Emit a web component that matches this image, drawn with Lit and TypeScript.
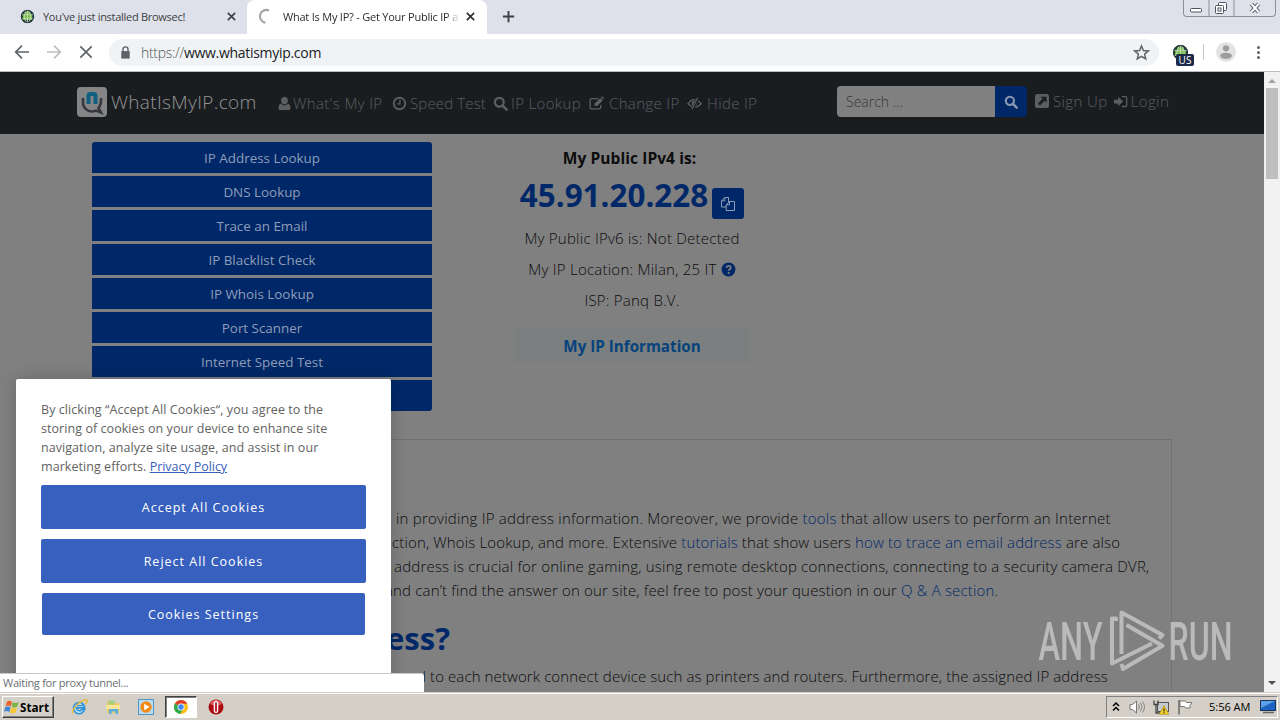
import { LitElement, html, css, svg } from 'lit';
import { customElement, property, state } from 'lit/decorators.js';
import { classMap } from 'lit/directives/class-map.js';

const icons: Record<string, unknown> = {
  user: svg`<path fill="currentColor" d="M8 1.2a3.6 3.6 0 0 1 3.6 3.8c0 2.2-1.6 4-3.6 4S4.400 7.200 4.400 5A3.600 3.600 0 0 1 8 1.200zM4.300 7.900C5.200 9.200 6.500 10 8 10s2.800-.8 3.700-2.100c2 .5 2.700 2.700 2.700 4.900 0 1.300-.8 2.200-2 2.200H3.600c-1.200 0-2-.9-2-2.200 0-2.200.7-4.400 2.700-4.900z"/>`,
  clock: svg`<circle cx="8" cy="8" r="6.1" fill="none" stroke="currentColor" stroke-width="2"/><path d="M8.500 4v4.500H5.500" fill="none" stroke="currentColor" stroke-width="1.300"/>`,
  search: svg`<circle cx="6.700" cy="6.700" r="4.700" fill="none" stroke="currentColor" stroke-width="2.400"/><path d="M10.200 10.200l4.300 4.300" stroke="currentColor" stroke-width="2.800" stroke-linecap="round"/>`,
  edit: svg`<path d="M12.500 9.500V12a1.800 1.800 0 0 1-1.800 1.800H3A1.800 1.800 0 0 1 1.200 12V4.500A1.800 1.800 0 0 1 3 2.700h6.800" fill="none" stroke="currentColor" stroke-width="1.400"/><path fill="currentColor" d="M6 8l6-6 2.700 2.700-6 6H6zM12.700 1.400l.6-.6c.4-.4.9-.4 1.300 0l1 1c.4.4.4.9 0 1.300l-.5.6z"/>`,
  eye: svg`<path d="M1 8.300Q7.500-.5 15.200 8.300 8.500 15.500 1 8.300z" fill="none" stroke="currentColor" stroke-width="1.400"/><circle cx="8" cy="7.700" r="2.900" fill="currentColor"/><path d="M11.800 2L5.500 14.500" stroke="#1a1d20" stroke-width="3.200"/><path d="M11.400 1.800L5.200 14" stroke="currentColor" stroke-width="1.300"/>`,
  signup: svg`<rect x="1" y="1" width="14" height="14" rx="2.600" fill="currentColor"/><path d="M6.500 3.800h6v6l-2-2-4.600 4.600-2-2L8.500 5.800z" fill="#1a1d20"/>`,
  login: svg`<path fill="currentColor" d="M1 6h4.500V3l5.300 5-5.300 5v-3H1z"/><path d="M9.500 2.700h3.700c.8 0 1.400.6 1.400 1.400v7.800c0 .8-.6 1.400-1.400 1.400H9.500" fill="none" stroke="currentColor" stroke-width="1.400"/>`,
  copy: svg`<path d="M4.800 1.500h3.700v4.200M4.800 1.500L1.500 4.800v6.200h4.700M4.800 1.500v3.300H1.500M9.500 5.500h5v9H6.200V8.800zM9.500 5.500v3.300H6.200M8.500 5.500V1.500" fill="none" stroke="currentColor"/>`,
  help: svg`<circle cx="8" cy="8" r="7.400" fill="#002868"/><path d="M5.700 6.100c.3-1.500 1.300-2 2.400-2 1.300 0 2.300.8 2.300 2 0 1.600-2.200 1.500-2.200 3.200" fill="none" stroke="#808080" stroke-width="1.900"/><rect x="7.200" y="10.700" width="2" height="1.900" fill="#808080"/>`,
  back: svg`<path d="M15 8H2M8 1.700L1.700 8 8 14.300" fill="none" stroke="currentColor" stroke-width="1.700"/>`,
  forward: svg`<path d="M1 8h13M8 1.700L14.300 8 8 14.300" fill="none" stroke="currentColor" stroke-width="1.700"/>`,
  stop: svg`<path d="M2.300 2.300l11.400 11.400M13.700 2.300L2.300 13.700" stroke="currentColor" stroke-width="1.700"/>`,
  close: svg`<path d="M3.500 3.500l9 9M12.500 3.500l-9 9" stroke="currentColor" stroke-width="2"/>`,
  plus: svg`<path d="M8 2v12M2 8h12" stroke="currentColor" stroke-width="2"/>`,
  lock: svg`<path d="M3.500 6.500h9v8h-9z" fill="currentColor"/><path d="M5.300 7V4.700a2.700 2.700 0 0 1 5.400 0V7" fill="none" stroke="currentColor" stroke-width="1.500"/>`,
  star: svg`<path d="M8 1.800l1.800 4.300 4.700.4-3.600 3 1.100 4.600L8 11.600l-4 2.500 1.100-4.600-3.600-3 4.700-.4z" fill="none" stroke="currentColor" stroke-width="1.400"/>`,
  spinner: svg`<path d="M7 13.800A6 6 0 1 1 10.500 2.500" fill="none" stroke="#a0a3a8" stroke-width="2"/>`,
  globe: svg`<circle cx="8" cy="8" r="7" fill="#24443a"/><path d="M3 6.500h10v5H3zM5 3h6v3H5z" fill="#7cc04b"/><path d="M1.500 6h13M1.500 10.500h13M8 1v14M8 1C3.500 5 3.500 11 8 15M8 1c4.500 4 4.500 10 0 14" fill="none" stroke="#cfe3c6" stroke-width=".8"/><circle cx="8" cy="8" r="6.600" fill="none" stroke="#24333f"/>`,
  avatar: svg`<circle cx="8" cy="8" r="8" fill="#e3e3e3"/><circle cx="8" cy="5" r="2.500" fill="#9d9d9d"/><ellipse cx="8" cy="11" rx="4.700" ry="2.500" fill="#9d9d9d"/>`,
  windows: svg`<path d="M3 2.500Q5.500 1 8 2.800L6.800 7.400Q4.300 5.800 1.600 7.200z" fill="#e8622c"/><path d="M8.700 3.200Q11.500 4.700 14.700 3l-1.500 4.800Q10.400 9.200 7.600 7.700z" fill="#7db544"/><path d="M1.400 8Q4 6.700 6.500 8.300L5.300 12.900Q2.700 11.300 0 12.700z" fill="#3f86d6"/><path d="M7.300 8.600q2.800 1.500 5.700.2l-1.400 4.700Q8.800 14.900 6 13.400z" fill="#f8c62c"/>`,
  ie: svg`<path d="M12.900 9.300H4.900a3.200 3.200 0 0 0 5.800 1.300h2.100A5.300 5.300 0 1 1 12.900 9.300z" fill="#bfe2f7" stroke="#2f93d8" stroke-width="1.500"/><path d="M5.200 7.200h5.800a2.900 2.900 0 0 0-5.800 0z" fill="#d4d0c8" stroke="#2f93d8"/><path d="M2 14.300C-.5 11.500 9 1.500 14.300 1.700c2 .3.300 3.300-.8 4.300" fill="none" stroke="#e9b93a" stroke-width="1.300"/>`,
  folder: svg`<path d="M2 2.500h5l1 1.500h6v10H2z" fill="#ecc95f"/><path d="M3.500 1.500h6v4h-6z" fill="#a9cf7c"/><path d="M1 6h14v4H1z" fill="#f8e59a"/><path d="M4 15v-5h9v5h-2.500v-2.500h-4V15z" fill="#58aee0"/>`,
  media: svg`<rect x=".5" y=".5" width="15" height="15" fill="#b9dcf2" stroke="#4f96c8"/><circle cx="8" cy="8" r="5.700" fill="#f28a16"/><path d="M6.200 4.800v6.400L11.500 8z" fill="#fff"/>`,
  chrome: svg`<circle cx="8" cy="8" r="7" fill="#fbc116"/><path d="M8 8L1.900 4.600A7 7 0 0 1 14.200 4.700H8z" fill="#e33b2e"/><path d="M8 8L1.900 4.600A7 7 0 0 0 7.200 15l3.200-5.500z" fill="#2da94f"/><circle cx="8" cy="8" r="3.500" fill="#fff"/><circle cx="8" cy="8" r="2.700" fill="#4285f4"/>`,
  opera: svg`<circle cx="8" cy="8" r="7.500" fill="#a80d12"/><path d="M2 5a6.500 6.500 0 0 1 12 0q-6 3.500-12 0z" fill="#dd5a58"/><rect x="5.700" y="2" width="4.600" height="12" rx="2.200" fill="#fff"/><rect x="7.100" y="3.200" width="1.800" height="9.600" rx=".9" fill="#b01419"/>`,
  chevrons: svg`<path d="M5 7l3-3 3 3M5 11.500l3-3 3 3" fill="none" stroke="#000" stroke-width="1.500"/>`,
  speaker: svg`<path d="M1 5.500h2.500L7.500 2v12l-4-3.500H1z" fill="#fff" stroke="#777"/><path d="M9.500 5.500q1.800 2.500 0 5M11.500 3.800q3 4.200 0 8.400M13.500 2.500q4 5.500 0 11" fill="none" stroke="#888"/>`,
  network: svg`<rect x="4.500" y="3.500" width="11" height="9" fill="#c4cad2" stroke="#555"/><path d="M1 1.500v4h4v-4M3 5.500V14h4" fill="none" stroke="#444" stroke-width="1.300"/><path d="M11 6.500l4.800 8.800H6.200z" fill="#f7cf2a" stroke="#a8850d" stroke-width=".6"/><path d="M11 9.500v3M11 13.300v1" stroke="#222" stroke-width="1.200"/>`,
  flag: svg`<path d="M2 1v14.500" stroke="#666" stroke-width="1.500"/><path d="M3 2h5.500l1 1.500H15l-2 3 0 2.500H8.500L7.500 7.500H3z" fill="#fff" stroke="#777"/>`,
  monitor: svg`<rect x=".5" y="1.500" width="15" height="10" fill="#1c62c0" stroke="#17345f"/><path d="M1 2h14L1 9z" fill="#5ba0e8"/><path d="M3 13.500h11" stroke="#666" stroke-width="1.500"/>`,
};

@customElement('svg-icon')
class SvgIcon extends LitElement {
  @property() name = '';
  @property({ type: Number }) size = 16;

  static styles = css`
    :host {
      display: inline-flex;
      flex: none;
    }
  `;

  render() {
    return html`<svg width=${this.size} height=${this.size} viewBox="0 0 16 16">${icons[this.name]}</svg>`;
  }
}

@customElement('browser-chrome')
class BrowserChrome extends LitElement {
  static styles = css`
    :host {
      display: block;
      flex: none;
      font-family: "Open Sans", sans-serif;
      color: #3c4043;
    }

    .tabs {
      display: flex;
      height: 34px;
      background: #dee1e9;
    }

    .tab {
      display: flex;
      align-items: center;
      box-sizing: border-box;
      height: 34px;
      padding-bottom: 1px;
      font-size: 11px;
      letter-spacing: -0.28px;
      white-space: nowrap;
    }

    .tab .title {
      flex: 1;
      overflow: hidden;
      margin: 0 7px 0 8px;
    }

    .tab.first {
      width: 247px;
      padding-left: 20px;
      padding-right: 9px;
    }

    .tab.active {
      width: 240px;
      padding-left: 11px;
      padding-right: 10px;
      background: #fff;
      border-radius: 8px 8px 0 0;
      color: #2b2d30;
    }

    .tab.active .title {
      margin-right: 4px;
      letter-spacing: -0.22px;
      -webkit-mask-image: linear-gradient(90deg, #000 92%, transparent);
    }

    .new-tab {
      display: flex;
      align-items: center;
      padding: 0 0 1px 14px;
    }

    .controls {
      display: flex;
      box-sizing: border-box;
      width: 93px;
      height: 17px;
      margin: 0 4px 0 auto;
      border: 1px solid #8b8f99;
      border-top: 0;
      border-radius: 0 0 4px 4px;
      overflow: hidden;
    }

    .controls svg {
      flex: none;
    }

    .toolbar {
      display: flex;
      align-items: center;
      box-sizing: border-box;
      height: 38px;
      padding: 0 14px 1px;
      border-bottom: 1px solid #b9bec2;
      background: #fff;
      color: #5f6368;
    }

    .buttons {
      display: flex;
      gap: 16px;
      width: 95px;
    }

    .faded {
      color: #bdbfc2;
    }

    .omnibox {
      display: flex;
      flex: 1;
      align-items: center;
      height: 27px;
      padding: 0 9px;
      border-radius: 14px;
      background: #eff3f6;
      font-size: 14px;
      letter-spacing: -0.3px;
    }

    .url {
      flex: 1;
      margin-left: 8px;
      font-weight: 300;
      color: #555;
    }

    .url b {
      font-weight: 400;
      color: #202124;
    }

    .extensions {
      display: flex;
      align-items: center;
      width: 107px;
    }

    .browsec {
      position: relative;
      display: flex;
      margin-left: 13px;
    }

    .badge {
      position: absolute;
      left: 4px;
      top: 10px;
      width: 18px;
      height: 12px;
      border-radius: 2px;
      background: #1c2b48;
      color: #fff;
      font-size: 10px;
      line-height: 12px;
      text-align: center;
      letter-spacing: 0;
    }

    .line {
      width: 1px;
      height: 16px;
      margin: 0 12px 0 14px;
      background: #c8cacc;
    }

    .dots {
      display: grid;
      gap: 2px;
      margin-left: 21px;
    }

    .dots i {
      width: 3px;
      height: 3px;
      border-radius: 50%;
      background: #5f6368;
    }
  `;

  render() {
    return html`
      <div class="tabs">
        <div class="tab first">
          <svg-icon name="globe" size="15"></svg-icon>
          <span class="title">You've just installed Browsec!</span>
          <svg-icon name="close" size="13"></svg-icon>
        </div>
        <div class="tab active">
          <svg-icon name="spinner" size="17"></svg-icon>
          <span class="title">What Is My IP? - Get Your Public IP a</span>
          <svg-icon name="close" size="13"></svg-icon>
        </div>
        <div class="new-tab"><svg-icon name="plus" size="15"></svg-icon></div>
        <div class="controls">
          <svg width="91" height="16" fill="none" stroke="#4d5360">
            <path d="M25 0v16M50 0v16" stroke="#8b8f99" />
            <rect x="6.500" y="8.500" width="11" height="3.500" rx="1" fill="#fff" />
            <rect x="34.500" y="2.500" width="8" height="8" rx="1" fill="#fff" />
            <rect x="31.500" y="5.500" width="8" height="8" rx="1" fill="#fff" />
            <rect x="34" y="8" width="3" height="3" />
            <path d="M67.500 4l7 8M74.500 4l-7 8" stroke-width="4" />
            <path d="M67.500 4l7 8M74.500 4l-7 8" stroke="#fff" stroke-width="2" />
          </svg>
        </div>
      </div>
      <div class="toolbar">
        <div class="buttons">
          <svg-icon name="back"></svg-icon>
          <svg-icon class="faded" name="forward"></svg-icon>
          <svg-icon name="stop"></svg-icon>
        </div>
        <div class="omnibox">
          <svg-icon name="lock" size="15"></svg-icon>
          <span class="url">https://<b>www.whatismyip.com</b></span>
          <svg-icon name="star" size="17"></svg-icon>
        </div>
        <div class="extensions">
          <div class="browsec">
            <svg-icon name="globe" size="17"></svg-icon>
            <span class="badge">US</span>
          </div>
          <span class="line"></span>
          <svg-icon name="avatar" size="20"></svg-icon>
          <div class="dots"><i></i><i></i><i></i></div>
        </div>
      </div>
    `;
  }
}

@customElement('cookie-banner')
class CookieBanner extends LitElement {
  static styles = css`
    :host {
      position: absolute;
      left: 16px;
      bottom: 0;
      box-sizing: border-box;
      width: 375px;
      height: 313px;
      padding: 21px 25px 0;
      border-radius: 2px 2px 0 0;
      background: #fff;
      box-shadow: 0 0 18px rgba(0, 0, 0, 0.2);
      font-family: "Open Sans", sans-serif;
      font-size: 12.5px;
    }

    .text {
      margin: 0 0 9px;
      line-height: 19px;
      letter-spacing: 0.06px;
      white-space: nowrap;
      color: #626262;
    }

    .text a {
      color: #3860be;
      text-decoration: underline;
      letter-spacing: -0.05px;
    }

    .actions {
      display: grid;
      gap: 10px;
    }

    .actions button {
      height: 44px;
      padding: 0;
      border: 0;
      border-radius: 2px;
      background: #3860be;
      color: #fff;
      font: inherit;
      letter-spacing: 1px;
    }

    .actions .settings {
      height: 42px;
      margin: 0 1px;
    }
  `;

  render() {
    return html`
      <p class="text">
        By clicking “Accept All Cookies“, you agree to the<br />
        storing of cookies on your device to enhance site<br />
        navigation, analyze site usage, and assist in our<br />
        marketing efforts. <a>Privacy Policy</a>
      </p>
      <div class="actions">
        <button>Accept All Cookies</button>
        <button>Reject All Cookies</button>
        <button class="settings">Cookies Settings</button>
      </div>
    `;
  }
}

@customElement('ip-page')
class IpPage extends LitElement {
  @state()
  private nav = [
    { icon: 'user', label: "What's My IP", cls: 'w-user' },
    { icon: 'clock', label: 'Speed Test', cls: 'w-clock' },
    { icon: 'search', label: 'IP Lookup', cls: 'w-search' },
    { icon: 'edit', label: 'Change IP', cls: 'w-edit' },
    { icon: 'eye', label: 'Hide IP', cls: 'w-eye' },
  ];

  @state()
  private tools = [
    'IP Address Lookup',
    'DNS Lookup',
    'Trace an Email',
    'IP Blacklist Check',
    'IP Whois Lookup',
    'Port Scanner',
    'Internet Speed Test',
    '',
  ];

  static styles = css`
    :host {
      flex: 1;
      min-width: 0;
      overflow: hidden;
      background: #808080;
      font: 300 15px "Open Sans", sans-serif;
      color: #0c0c0c;
    }

    .header {
      display: flex;
      align-items: center;
      height: 62px;
      padding-left: 77px;
      background: #1a1d20;
      color: #5c5e60;
      white-space: nowrap;
    }

    .brand {
      display: flex;
      align-items: center;
      gap: 4px;
      width: 201px;
      padding-bottom: 2px;
      font-size: 19px;
      letter-spacing: 0.35px;
      color: #949596;
    }

    .nav {
      display: flex;
      gap: 8px;
      width: 559px;
      letter-spacing: 0.35px;
    }

    .item {
      display: flex;
      align-items: center;
      gap: 3px;
    }

    .w-user { width: 106px; gap: 1px; margin-left: -1px; margin-right: 1px; }
    .w-clock { width: 93px; letter-spacing: 0.15px; }
    .w-search { width: 88px; }
    .w-edit { width: 90px; gap: 5px; }
    .w-eye { width: 69px; gap: 5px; }

    .search {
      display: flex;
      width: 190px;
      height: 31px;
      margin: -3px 7px 0 0;
      border-radius: 4px;
      overflow: hidden;
      font-size: 14px;
      line-height: 31px;
    }

    .search span {
      flex: 1;
      padding-left: 9px;
      background: #808080;
      color: #34373a;
    }

    .search i {
      display: flex;
      align-items: center;
      justify-content: center;
      width: 32px;
      background: #002868;
      color: #8b98b0;
    }

    .account {
      display: flex;
      gap: 5px;
      padding-bottom: 4px;
      letter-spacing: 0.4px;
    }

    .top {
      display: flex;
      padding: 8px 0 0 92px;
      height: 297px;
    }

    .tools {
      display: grid;
      align-content: start;
      gap: 3px;
      width: 340px;
    }

    .tool {
      height: 31px;
      background: #002868;
      color: #8f9db8;
      font-size: 13.4px;
      font-weight: 400;
      line-height: 32px;
      text-align: center;
    }

    .tool:first-child {
      border-radius: 3px 3px 0 0;
    }

    .tool:last-child {
      border-radius: 0 0 3px 3px;
    }

    .info {
      display: flex;
      flex-direction: column;
      align-items: center;
      width: 360px;
      margin: 5px 0 0 20px;
      line-height: 24px;
    }

    .info .label {
      height: 24px;
      margin: -1px 5px 1px 0;
      font-size: 15.500px;
      font-weight: 700;
      letter-spacing: 0.08px;
    }

    .address {
      display: flex;
      gap: 4px;
      height: 40px;
      margin: 8px 0 7px;
      color: #002868;
      font-size: 31.400px;
      font-weight: 700;
      line-height: 32px;
    }

    .address i {
      display: flex;
      align-items: center;
      justify-content: center;
      align-self: end;
      width: 32px;
      height: 31px;
      border-radius: 3px;
      background: #002868;
      color: #8f9db8;
    }

    .row {
      display: flex;
      align-items: center;
      gap: 4px;
      height: 24px;
      margin-bottom: 7px;
      letter-spacing: 0.24px;
    }

    .more {
      width: 236px;
      height: 34px;
      margin-top: 10px;
      background: #7b7f80;
      color: #06437c;
      font-size: 15.200px;
      font-weight: 700;
      line-height: 35px;
      text-align: center;
    }

    .card {
      box-sizing: border-box;
      width: 1080px;
      height: 300px;
      margin-left: 92px;
      padding: 66px 0 0 299px;
      border: 1px solid #727272;
      line-height: 24px;
      letter-spacing: 0.2px;
      white-space: nowrap;
    }

    .card p {
      margin: 0;
    }

    .card p.in {
      padding-left: 4px;
      letter-spacing: 0.22px;
    }

    .card p.ction {
      letter-spacing: 0.14px;
    }

    .card p.addr {
      padding-left: 2px;
    }

    .card p.cut {
      margin-left: -7px;
      letter-spacing: 0.16px;
    }

    .card a {
      color: #002868;
    }

    .card h2 {
      margin: 15px 0 5px -6px;
      font-size: 31px;
      font-weight: 700;
      line-height: 42px;
      letter-spacing: 0;
      color: #002868;
    }

    .card p.last {
      padding-left: 25px;
      letter-spacing: 0.1px;
    }
  `;

  render() {
    return html`
      <div class="header">
        <div class="brand">
          <svg width="30" height="30">
            <rect width="30" height="30" rx="4" fill="#858585" />
            <path d="M6 11v4a9 9 0 0 0 13 8.500l5 2-2.500-4.500q3-4 2.500-10" fill="none" stroke="#34353d" stroke-width="2.500" />
            <path d="M11.500 17V8.500q0-1.500 1.500-1.500h4q1.500 0 1.500 1.500V17" fill="none" stroke="#0f5f80" stroke-width="4" />
          </svg>
          WhatIsMyIP.com
        </div>
        <div class="nav">
          ${this.nav.map((n) => html`
            <div class=${classMap({ item: true, [n.cls]: true })}>
              <svg-icon name=${n.icon} size="15"></svg-icon>${n.label}
            </div>
          `)}
        </div>
        <div class="search">
          <span>Search ...</span>
          <i><svg-icon name="search" size="14"></svg-icon></i>
        </div>
        <div class="account">
          <div class="item"><svg-icon name="signup" size="16"></svg-icon>Sign Up</div>
          <div class="item"><svg-icon name="login" size="15"></svg-icon>Login</div>
        </div>
      </div>
      <div class="top">
        <div class="tools">${this.tools.map((t) => html`<div class="tool">${t}</div>`)}</div>
        <div class="info">
          <div class="label">My Public IPv4 is:</div>
          <div class="address">45.91.20.228 <i><svg-icon name="copy" size="16"></svg-icon></i></div>
          <div class="row">My Public IPv6 is: Not Detected</div>
          <div class="row">My IP Location: Milan, 25 IT <svg-icon name="help" size="15"></svg-icon></div>
          <div class="row">ISP: Panq B.V.</div>
          <div class="more">My IP Information</div>
        </div>
      </div>
      <div class="card">
        <p class="in">in providing IP address information. Moreover, we provide <a>tools</a> that allow users to perform an Internet</p>
        <p class="ction">ction, Whois Lookup, and more. Extensive <a>tutorials</a> that show users <a>how to trace an email address</a> are also</p>
        <p class="addr">address is crucial for online gaming, using remote desktop connections, connecting to a security camera DVR,</p>
        <p class="cut">and can’t find the answer on our site, feel free to post your question in our <a>Q &amp; A section</a>.</p>
        <h2>ess?</h2>
        <p class="last">d to each network connect device such as printers and routers. Furthermore, the assigned IP address</p>
      </div>
    `;
  }
}

@customElement('task-bar')
class TaskBar extends LitElement {
  static styles = css`
    :host {
      display: flex;
      flex: none;
      align-items: center;
      box-sizing: border-box;
      height: 28px;
      padding: 1px 2px;
      border-top: 1px solid #d4d0c8;
      background: #d4d0c8;
      box-shadow: inset 0 1px #fff;
      font-family: "Open Sans", sans-serif;
    }

    .start {
      display: flex;
      align-items: center;
      box-sizing: border-box;
      width: 52px;
      height: 22px;
      padding-left: 1px;
      border: 1px solid;
      border-color: #fff #404040 #404040 #fff;
      box-shadow: inset -1px -1px #808080;
      font-size: 11.700px;
      font-weight: 700;
    }

    .quick {
      display: flex;
      align-items: center;
      gap: 17px;
      margin-left: 17px;
    }

    .running {
      display: flex;
      align-items: center;
      justify-content: center;
      box-sizing: border-box;
      width: 32px;
      height: 22px;
      margin: 0 -6px;
      border: 1px solid;
      border-color: #404040 #fff #fff #404040;
      box-shadow: inset 1px 1px #808080;
      background: #fff;
    }

    .tray {
      display: flex;
      align-items: center;
      box-sizing: border-box;
      width: 172px;
      height: 22px;
      margin-left: auto;
      padding-left: 1px;
      border: 1px solid;
      border-color: #808080 #fff #fff #808080;
      font-size: 11px;
    }

    .tray svg-icon + svg-icon {
      margin-left: 8px;
    }

    .tray .first {
      margin-right: -3px;
    }

    .clock {
      margin: 0 10px 0 16px;
      white-space: nowrap;
    }
  `;

  render() {
    return html`
      <div class="start"><svg-icon name="windows" size="16"></svg-icon>Start</div>
      <div class="quick">
        <svg-icon name="ie" size="17"></svg-icon>
        <svg-icon name="folder"></svg-icon>
        <svg-icon name="media"></svg-icon>
        <div class="running"><svg-icon name="chrome"></svg-icon></div>
        <svg-icon name="opera"></svg-icon>
      </div>
      <div class="tray">
        <svg-icon class="first" name="chevrons"></svg-icon>
        <svg-icon name="speaker"></svg-icon>
        <svg-icon name="network"></svg-icon>
        <svg-icon name="flag"></svg-icon>
        <span class="clock">5:56 AM</span>
        <svg-icon name="monitor"></svg-icon>
      </div>
    `;
  }
}

@customElement('app-root')
class AppRoot extends LitElement {
  static styles = css`
    :host {
      display: flex;
      flex-direction: column;
      width: 1280px;
      height: 720px;
      overflow: hidden;
    }

    .viewport {
      position: relative;
      display: flex;
      flex: 1;
      min-height: 0;
      overflow: hidden;
    }

    .scrollbar {
      display: flex;
      flex-direction: column;
      align-items: center;
      box-sizing: border-box;
      width: 16px;
      padding: 7px 0;
      background: #f1f1f1;
    }

    .up,
    .down {
      border: 4px solid transparent;
      border-top-width: 0;
      border-bottom: 4px solid #a3a3a3;
    }

    .down {
      margin-top: auto;
      border-bottom-width: 0;
      border-top: 4px solid #505050;
    }

    .thumb {
      width: 12px;
      height: 91px;
      margin-top: 5px;
      background: #bfbfbf;
    }

    .status {
      position: absolute;
      left: 0;
      bottom: 0;
      box-sizing: border-box;
      width: 424px;
      height: 19px;
      padding-left: 3px;
      border-top: 1px solid #c9c9c9;
      border-radius: 0 3px 0 0;
      background: #fff;
      color: #6b6e72;
      font: 11px/18px "Open Sans", sans-serif;
      letter-spacing: -0.27px;
    }

    .watermark {
      position: absolute;
      left: 1035px;
      top: 528px;
      overflow: visible;
    }
  `;

  render() {
    return html`
      <browser-chrome></browser-chrome>
      <div class="viewport">
        <ip-page></ip-page>
        <div class="scrollbar">
          <i class="up"></i>
          <i class="thumb"></i>
          <i class="down"></i>
        </div>
        <cookie-banner></cookie-banner>
        <div class="status">Waiting for proxy tunnel...</div>
        <svg class="watermark" width="220" height="84" viewBox="1035 600 220 84" opacity=".66">
          <g font-family="Roboto" font-size="53" font-weight="500" fill="#d8d8d8">
            <text x="1038.500" y="660" textLength="64" lengthAdjust="spacingAndGlyphs">ANY</text>
            <text x="1168.500" y="660" textLength="64" lengthAdjust="spacingAndGlyphs">RUN</text>
          </g>
          <path
            d="M1121.500 654V612.500l41 22.500-3.500 3.500M1126.500 625l36 20.700-39.500 23.300-1.500-5M1116 621v-2.500h-4v45l40-20"
            fill="none" stroke="#d8d8d8" stroke-width="4" stroke-linejoin="round" />
        </svg>
      </div>
      <task-bar></task-bar>
    `;
  }
}
